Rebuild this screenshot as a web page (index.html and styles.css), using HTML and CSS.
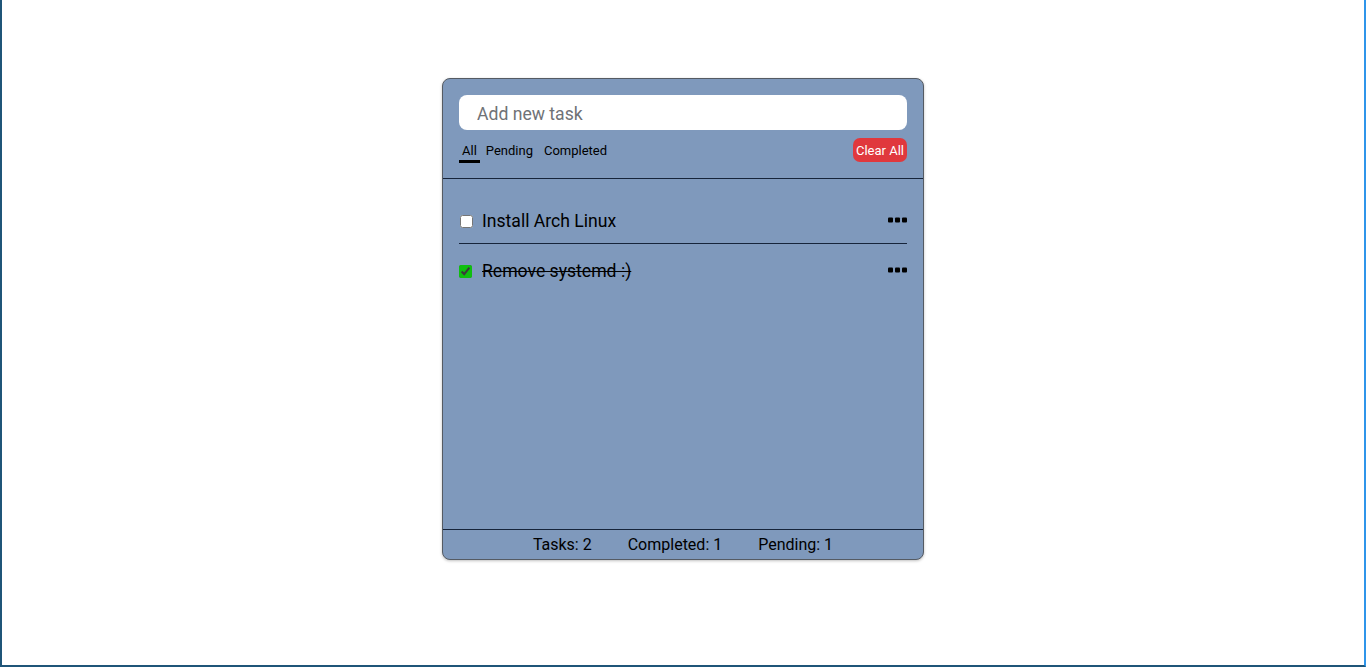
FILE: index.html
```html
<!DOCTYPE html>
<html>
<head>
<meta charset="utf-8">
<link rel="stylesheet" href="styles.css">
</head>
<body>
<div class="frame"></div>
<main class="card">
  <header class="head">
    <input class="new-task" type="text" placeholder="Add new task">
    <div class="controls">
      <nav class="filters">
        <span class="filter active">All</span>
        <span class="filter">Pending</span>
        <span class="filter">Completed</span>
      </nav>
      <button class="clear">Clear All</button>
    </div>
  </header>
  <ul class="tasks">
    <li class="task">
      <label class="task-label"><input type="checkbox" class="check"><span class="task-text">Install Arch Linux</span></label>
      <svg class="dots" width="19" height="6" viewBox="0 0 19 6"><rect x="0" y="0.5" width="5" height="5" rx="1"/><rect x="7" y="0.5" width="5" height="5" rx="1"/><rect x="14" y="0.5" width="5" height="5" rx="1"/></svg>
    </li>
    <li class="task">
      <label class="task-label"><input type="checkbox" class="check" checked><span class="task-text done">Remove systemd :)</span></label>
      <svg class="dots" width="19" height="6" viewBox="0 0 19 6"><rect x="0" y="0.5" width="5" height="5" rx="1"/><rect x="7" y="0.5" width="5" height="5" rx="1"/><rect x="14" y="0.5" width="5" height="5" rx="1"/></svg>
    </li>
  </ul>
  <footer class="foot">
    <span class="stat">Tasks: 2</span>
    <span class="stat">Completed: 1</span>
    <span class="stat">Pending: 1</span>
  </footer>
</main>
</body>
</html>
```

FILE: styles.css
```css
* { box-sizing: border-box; }
html, body { margin: 0; padding: 0; height: 100%; }
body {
  background: #ffffff;
  font-family: Roboto, "Liberation Sans", sans-serif;
  color: #000;
  padding-top: 78px;
}
.frame {
  position: fixed;
  inset: 0;
  border-left: 2px solid #1f5578;
  border-right: 2px solid #2f95ea;
  border-bottom: 2px solid #1f5578;
  pointer-events: none;
}
.card {
  width: 482px;
  height: 482px;
  margin: 0 auto;
  background: #7f99bc;
  border: 1px solid #555b63;
  border-radius: 8px;
  box-shadow: 0 1px 3px rgba(0,0,0,0.25);
  display: flex;
  flex-direction: column;
  overflow: hidden;
}
.head {
  padding: 16px 16px 16px;
  border-bottom: 1px solid #16243a;
  display: flex;
  flex-direction: column;
  gap: 8px;
}
.new-task {
  width: 100%;
  height: 35px;
  border: none;
  border-radius: 8px;
  background: #fff;
  padding: 3px 18px 0;
  font-family: Roboto, "Liberation Sans", sans-serif;
  font-size: 17.6px;
  outline: none;
}
.new-task::placeholder { color: #6f7276; }
.controls {
  display: flex;
  align-items: center;
  justify-content: space-between;
  height: 24px;
}
.filters { display: flex; gap: 6px; font-size: 13px; margin-top: 5px; }
.filter {
  padding: 0 3px 1px;
  line-height: 16px;
  border-bottom: 3px solid transparent;
}
.filter:nth-child(2) { padding: 0 0 1px; }
.filter:nth-child(3) { padding: 0 0 1px; margin-left: 5px; }
.filter.active { border-bottom-color: #000; }
.clear {
  height: 24px;
  background: #e0383d;
  color: #fff;
  border: none;
  border-radius: 7px;
  padding: 0 3px 0 3px;
  font-family: Roboto, "Liberation Sans", sans-serif;
  font-size: 13px;
}
.tasks {
  list-style: none;
  margin: 0;
  padding: 17px 16px 0;
  flex: 1;
}
.task {
  display: flex;
  align-items: center;
  justify-content: space-between;
  padding: 15px 0 11px;
}
.task + .task { border-top: 1px solid #16243a; padding-top: 17px; }
.task-label { display: flex; align-items: center; font-size: 17.6px; }
.check {
  margin: 0 10px 0 0;
  width: 13px;
  height: 13px;
  accent-color: #0fbf0f;
}
.task:first-child .check { margin-left: 1px; margin-right: 9px; }
.task-text { line-height: 21px; }
.done { text-decoration: line-through; }
.dots { fill: #000; margin-top: -3px; }
.foot {
  height: 30px;
  border-top: 1px solid #16243a;
  display: flex;
  justify-content: center;
  align-items: center;
  font-size: 16px;
  gap: 36px;
}
```
